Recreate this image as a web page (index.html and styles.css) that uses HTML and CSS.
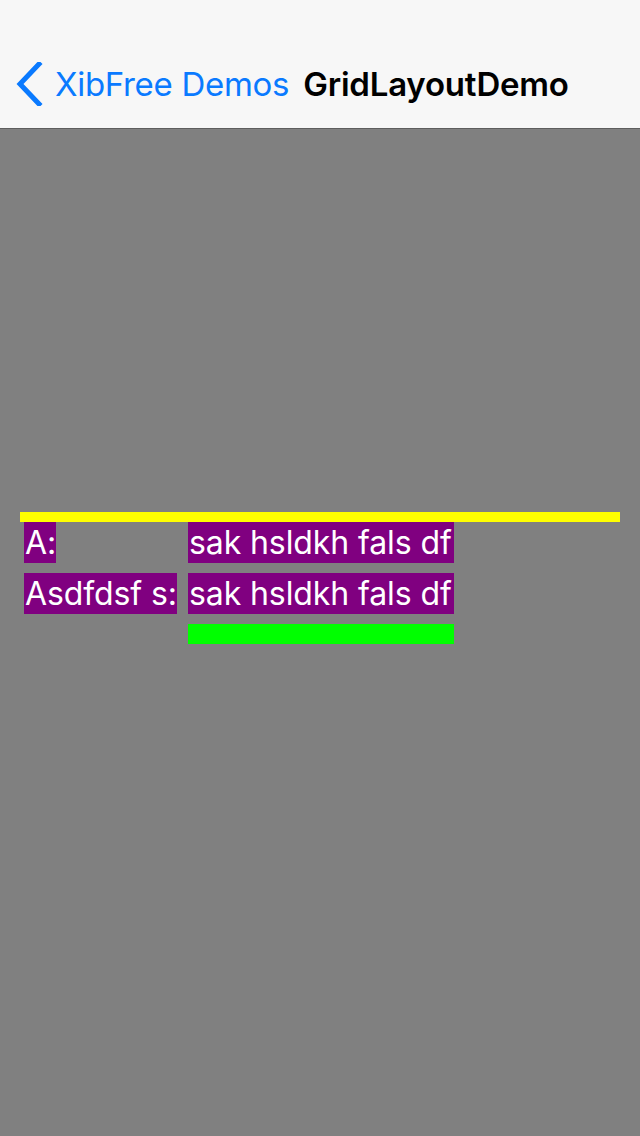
FILE: index.html
```html
<!DOCTYPE html>
<html>
<head>
<meta charset="utf-8">
<link rel="stylesheet" href="styles.css">
</head>
<body>
<div class="screen">
  <header class="navbar">
    <div class="status"></div>
    <div class="navrow">
      <div class="back">
        <svg class="chev" width="30" height="44" viewBox="0 0 30 44">
          <path d="M25 2 L6 22 L25 42" fill="none" stroke="#0a7aff" stroke-width="5" stroke-linecap="square" stroke-linejoin="miter"/>
        </svg>
        <span class="back-text">XibFree Demos</span>
      </div>
      <div class="title">GridLayoutDemo</div>
    </div>
  </header>
  <main class="content">
    <div class="yellow"></div>
    <div class="grid">
      <div class="cell label">A:</div>
      <div class="cell value">sak hsldkh fals df</div>
      <div class="cell label">Asdfdsf s:</div>
      <div class="cell value">sak hsldkh fals df</div>
      <div class="spacer"></div>
      <div class="green"></div>
    </div>
  </main>
</div>
</body>
</html>
```

FILE: styles.css
```css
html, body {
  margin: 0;
  padding: 0;
}
body {
  width: 640px;
  height: 1136px;
  overflow: hidden;
  font-family: Inter, "Liberation Sans", sans-serif;
}
.screen {
  width: 640px;
  height: 1136px;
  display: flex;
  flex-direction: column;
  background: #808080;
}
.navbar {
  background: #f7f7f7;
  height: 128px;
  border-bottom: 1px solid #5e5e5e;
  display: flex;
  flex-direction: column;
}
.status {
  height: 40px;
}
.navrow {
  height: 88px;
  display: flex;
  align-items: center;
}
.back {
  display: flex;
  align-items: center;
  padding-left: 14px;
}
.chev {
  display: block;
}
.back-text {
  color: #0a7aff;
  font-size: 33px;
  margin-left: 11px;
  letter-spacing: -0.3px;
}
.title {
  margin-left: 14px;
  font-size: 33px;
  font-weight: 600;
  color: #000;
  letter-spacing: -0.2px;
}
.content {
  flex: 1;
  padding-top: 383px;
}
.yellow {
  height: 10px;
  margin: 0 20px;
  background: #ffff00;
}
.grid {
  display: grid;
  grid-template-columns: 164px 266px;
  grid-auto-rows: 41px;
  row-gap: 10px;
  padding-left: 24px;
}
.cell {
  background: #800080;
  color: #fff;
  font-size: 32px;
  line-height: 41px;
  white-space: nowrap;
  padding-left: 1px;
  letter-spacing: -0.1px;
}
.label {
  justify-self: start;
}
.value {
  justify-self: start;
  width: 265px;
  overflow: hidden;
}
.green {
  background: #00ff00;
  height: 20px;
}
```
